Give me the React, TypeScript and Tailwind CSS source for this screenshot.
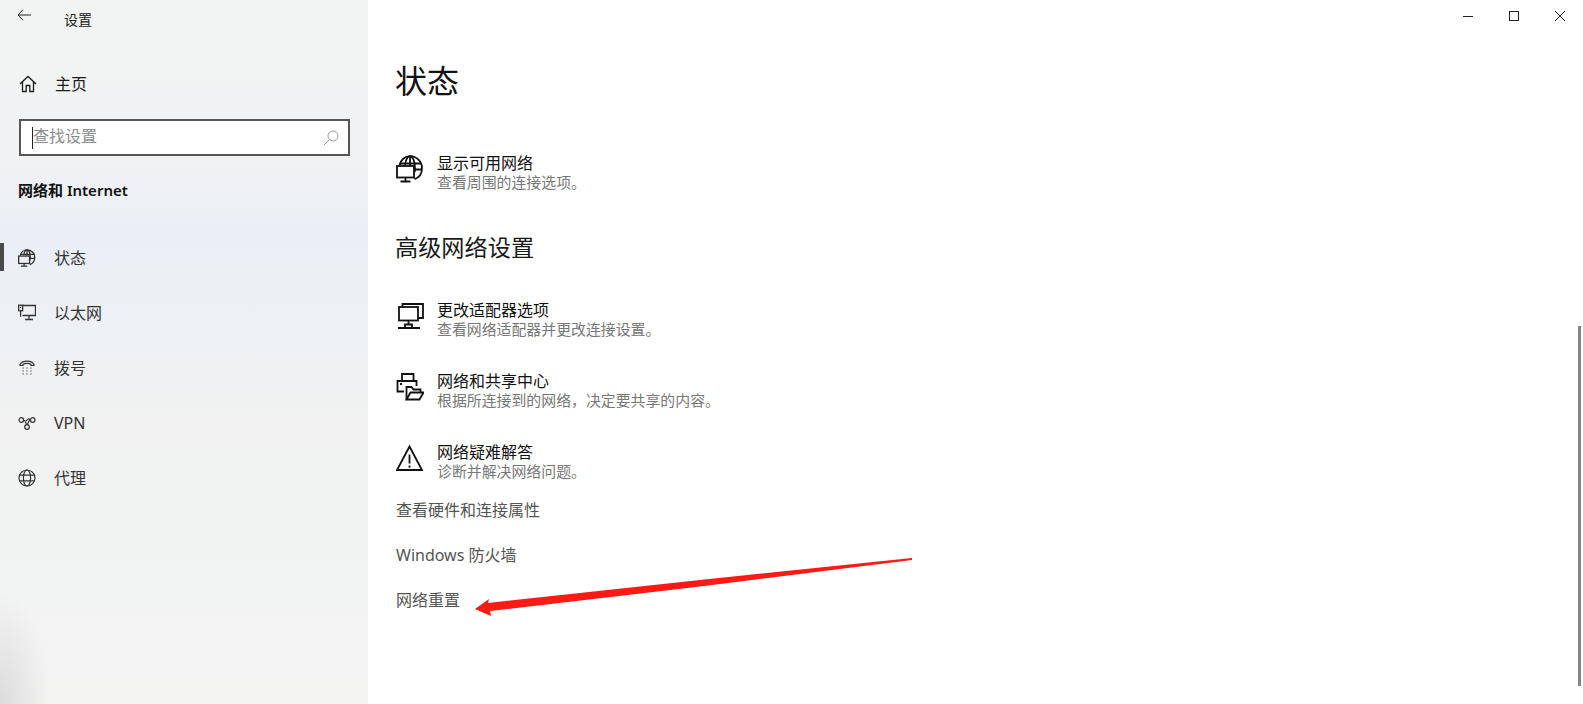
import React from 'react';

const FONT = 'font-["Noto_Sans","Noto_Sans_CJK_SC",sans-serif]';

const GlobePc = ({ className }: { className: string }) => (
  <svg viewBox="0 0 28 28" className={className} fill="none" stroke="currentColor" strokeWidth="1.800">
    <path d="M3.500 10.500C4.500 5 9 1.200 14 1.200c6.600 0 12 5.400 12 12 0 5-3 9.300-7.500 11" />
    <path d="M9 10c.5-4.500 2.500-8.800 5-8.800s5 4.500 5 12c0 1.500-.1 2.800-.3 4" />
    <path d="M14 1.200V11M3.500 8.500h21.500M19 14.500h6.800" />
    <rect x="1" y="11" width="17" height="11.500" fill="#fff" />
    <path d="M9.500 22.500v4M4.500 26.500h10" />
  </svg>
);

const NavGlobePc = () => (
  <svg viewBox="0 0 28 28" className="h-[18px] w-[18px]" fill="none" stroke="currentColor" strokeWidth="2">
    <path d="M3.500 10.500C4.500 5 9 1.200 14 1.200c6.600 0 12 5.400 12 12 0 5-3 9.300-7.500 11" />
    <path d="M9 10c.5-4.500 2.500-8.800 5-8.800s5 4.500 5 12c0 1.500-.1 2.800-.3 4" />
    <path d="M14 1.200V11M3.500 8.500h21.500M19 14.500h6.800" />
    <rect x="1" y="11" width="17" height="11.500" />
    <path d="M9.500 22.500v4M4.500 26.500h10" />
  </svg>
);

const HomeIcon = () => (
  <svg viewBox="0 0 18 18" className="h-[18px] w-[18px]" fill="none" stroke="currentColor" strokeWidth="1.300">
    <path d="M1 9 9 1.500 17 9M3.500 7v9.500h3.700v-6h3.600v6h3.700V7" />
  </svg>
);

const EthernetIcon = () => (
  <svg viewBox="0 0 18 18" className="h-[18px] w-[18px]" fill="none" stroke="currentColor" strokeWidth="1.300">
    <path d="M4.500 1.500h13v10H4.500M11 11.500v3.500M7 15.500h8" />
    <rect x="0.600" y="1.200" width="4" height="5.500" />
    <path d="M2.600 6.700v6M2 3.300h1.200" />
  </svg>
);

const DialIcon = () => (
  <svg viewBox="0 0 18 18" className="h-[18px] w-[18px]" fill="none" stroke="currentColor" strokeWidth="1.200">
    <path d="M2 6.500V5.300C3.500 3 6 2.200 9 2.200s5.500.8 7 3.100v1.200h-3V5.300c-1-.6-2.500-.9-4-.9s-3 .3-4 .9v1.200z" />
    <path d="M4.500 9h1.200M8.400 9h1.200M12.300 9h1.200M4.500 12h1.200M8.400 12h1.200M12.300 12h1.200M4.500 15h1.200M8.400 15h1.200M12.300 15h1.200" />
  </svg>
);

const VpnIcon = () => (
  <svg viewBox="0 0 18 18" className="h-[18px] w-[18px]" fill="none" stroke="currentColor" strokeWidth="1.200">
    <circle cx="3.300" cy="6" r="2.300" />
    <circle cx="14.700" cy="6" r="2.300" />
    <circle cx="9" cy="13" r="2.300" />
    <path d="M5.600 6c2 0 2.400 4.700 3.400 4.700S10.400 6 12.400 6" />
    <path d="M12.400 6c-1.500-2.500-3-.5-4.300 1" />
  </svg>
);

const GlobeIcon = () => (
  <svg viewBox="0 0 18 18" className="h-[18px] w-[18px]" fill="none" stroke="currentColor" strokeWidth="1.200">
    <circle cx="9" cy="9" r="8" />
    <ellipse cx="9" cy="9" rx="3.600" ry="8" />
    <path d="M1.500 6.200h15M1.500 11.800h15" />
  </svg>
);

const AdapterIcon = () => (
  <svg viewBox="0 0 28 28" className="h-7 w-7" fill="none" stroke="currentColor" strokeWidth="1.800">
    <path d="M6.500 5V2h20.500v14H22" />
    <rect x="3" y="5" width="19" height="13.500" fill="#fff" />
    <path d="M12.500 18.500v4M9 26v-3.500h7V26zM2 26h22" />
  </svg>
);

const SharingIcon = () => (
  <svg viewBox="0 0 28 28" className="h-7 w-7" fill="none" stroke="currentColor" strokeWidth="1.800">
    <path d="M6 8V1h11.500v7" />
    <path d="M8 18.500H1.500V8h19v5" />
    <path d="M4 11h2" />
    <path d="M10.500 26.500V14h5l2 2.500h7V20" />
    <path d="M10.500 26.500l4-7H27.500l-4 7z" fill="#fff" />
  </svg>
);

const WarningIcon = () => (
  <svg viewBox="0 0 28 28" className="h-7 w-7" fill="none" stroke="currentColor" strokeWidth="1.800">
    <path d="M13.500 2.500 1 26h25z" />
    <path d="M13.500 10.500v9M13.500 21.500v2.200" />
  </svg>
);

const sideItems = [
  { label: '状态', icon: <NavGlobePc />, active: true },
  { label: '以太网', icon: <EthernetIcon /> },
  { label: '拨号', icon: <DialIcon /> },
  { label: 'VPN', icon: <VpnIcon /> },
  { label: '代理', icon: <GlobeIcon /> },
];

const Sidebar = () => (
  <aside className="relative h-full w-[368px] shrink-0 overflow-hidden bg-[linear-gradient(180deg,#f2f3f3_0%,#f1f2f3_22%,#eaeff6_33%,#ecf0f5_42%,#f1f2f1_60%,#f1f3f3_75%,#f4f4f3_100%)]">
    <div className="absolute bottom-0 left-0 h-[110px] w-[50px] bg-[radial-gradient(ellipse_at_bottom_left,#dcdcdc_0%,#f4f4f300_72%)]" />
    <div className="relative">
      <div className="flex h-[57px] items-start">
        <svg viewBox="0 0 14 12" className="ml-[17px] mt-[9px] h-3 w-[14px] text-[#222]" fill="none" stroke="currentColor" strokeWidth="1">
          <path d="M6 .8 1 6l5 5.200M1 6h13" />
        </svg>
        <span className="ml-[33px] mt-[10px] text-[14px] leading-5 text-[#222]">设置</span>
      </div>
      <div className="flex h-[53px] items-center pl-[19px] text-[#1c1c1c]">
        <HomeIcon />
        <span className="ml-[18px] text-[16px] leading-6">主页</span>
      </div>
      <div className="mx-[19px] mt-[9px] box-border flex h-[37px] w-[331px] items-center border-2 border-[#555555] bg-white pl-[11px] pr-[9px]">
        <span className="h-[22px] w-px bg-[#222]" />
        <span className="-mt-[3px] flex-1 text-[16px] leading-6 text-[#8c8c8c]">查找设置</span>
        <svg viewBox="0 0 16 16" className="h-4 w-4 text-[#9a9a9a]" fill="none" stroke="currentColor" strokeWidth="1">
          <circle cx="10" cy="6" r="5" />
          <path d="M6.300 9.700 1 15" />
        </svg>
      </div>
      <h2 className="ml-[18px] mt-[22px] text-[15px] font-semibold leading-6 text-[#111]">网络和 Internet</h2>
      <nav className="mt-[28px] flex flex-col">
        {sideItems.map((item) => (
          <div key={item.label} className="relative flex h-[55px] items-center pl-[18px] text-[#333]">
            {item.active && <span className="absolute left-0 top-[13px] h-7 w-1 bg-[#4a4a4a]" />}
            {item.icon}
            <span className="ml-[18px] text-[16px] leading-6">{item.label}</span>
          </div>
        ))}
      </nav>
    </div>
  </aside>
);

const SettingRow = ({ icon, title, desc }: { icon: React.ReactNode; title: string; desc: string }) => (
  <div className="flex h-10 items-start gap-[13px]">
    <span className="mt-[2px] flex h-7 w-7 shrink-0 text-[#111]">{icon}</span>
    <div className="flex flex-col">
      <span className="text-[16px] leading-5 text-[#111]">{title}</span>
      <span className="-mt-px text-[14.900px] leading-5 text-[#777]">{desc}</span>
    </div>
  </div>
);

const WindowControls = () => (
  <div className="flex h-[32px] items-start justify-end gap-9 pr-[18px] pt-[11px] text-[#222]">
    <svg viewBox="0 0 10 10" className="h-2.5 w-2.5" fill="none" stroke="currentColor"><path d="M0 5.500h10" /></svg>
    <svg viewBox="0 0 10 10" className="h-2.5 w-2.5" fill="none" stroke="currentColor"><rect x="0.500" y="0.500" width="9" height="9" /></svg>
    <svg viewBox="0 0 10 10" className="h-2.5 w-2.5" fill="none" stroke="currentColor"><path d="M0 0l10 10M10 0 0 10" /></svg>
  </div>
);

const RedArrow = () => (
  <svg viewBox="0 0 1583 704" className="pointer-events-none absolute left-[-368px] top-0 h-[704px] w-[1583px]">
    <path d="M912 558 700 580 488 603 489 599 475 609 491 616 490 611 700 586.500 912 560Z" fill="#fb1a14" />
  </svg>
);

export default function App() {
  return (
    <div className={`flex h-[704px] w-[1583px] overflow-hidden bg-white ${FONT}`}>
      <Sidebar />
      <main className="relative flex-1">
        <WindowControls />
        <div className="flex flex-col pl-[28px]">
          <h1 className="-ml-px mt-[29px] text-[32px] leading-10 text-[#111]">状态</h1>
          <div className="mt-[52px]">
            <SettingRow icon={<GlobePc className="h-7 w-7" />} title="显示可用网络" desc="查看周围的连接选项。" />
          </div>
          <h2 className="-ml-px mt-[38px] text-[23.200px] leading-8 text-[#1a1a1a]">高级网络设置</h2>
          <div className="mt-[37px] flex flex-col gap-[31px]">
            <SettingRow icon={<AdapterIcon />} title="更改适配器选项" desc="查看网络适配器并更改连接设置。" />
            <SettingRow icon={<SharingIcon />} title="网络和共享中心" desc="根据所连接到的网络，决定要共享的内容。" />
            <SettingRow icon={<WarningIcon />} title="网络疑难解答" desc="诊断并解决网络问题。" />
          </div>
          <div className="mt-[16px] flex flex-col gap-[21px] text-[16px] leading-6 text-[#555]">
            <span>查看硬件和连接属性</span>
            <span>Windows 防火墙</span>
            <span>网络重置</span>
          </div>
        </div>
        <div className="absolute right-[2px] top-[326px] h-[360px] w-[3px] bg-[#858585]" />
        <RedArrow />
      </main>
    </div>
  );
}
